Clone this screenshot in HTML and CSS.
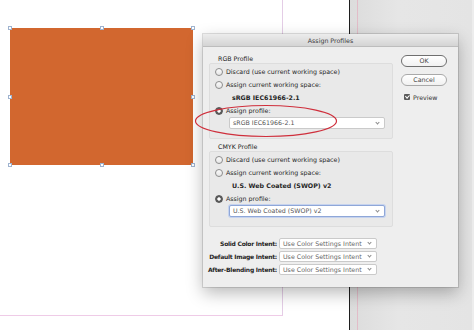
FILE: index.html
```html
<!DOCTYPE html>
<html>
	<head>
		<meta charset="UTF-8">
		<title>Assign Profiles</title>
		<link rel="stylesheet" href="styles.css">
	</head>
	<body>
		<div id="desk">
			<div class="page"></div>
			<div class="pasteboard"></div>
			<div class="bleed"></div>

			<div class="art">
				<span class="handle h-tl"></span>
				<span class="handle h-tc"></span>
				<span class="handle h-tr"></span>
				<span class="handle h-ml"></span>
				<span class="handle h-mr"></span>
				<span class="handle h-bl"></span>
				<span class="handle h-bc"></span>
				<span class="handle h-br"></span>
			</div>

			<div class="dialog">
				<div class="titlebar">Assign Profiles</div>
				<div class="dialog-body">
					<div class="main">
						<div class="group-title">RGB Profile</div>
						<div class="group-box">
							<div class="row"><span class="radio"></span>Discard (use current working space)</div>
							<div class="row"><span class="radio"></span>Assign current working space:</div>
							<div class="row strong">sRGB IEC61966-2.1</div>
							<div class="row"><span class="radio on"></span>Assign profile:</div>
							<div class="select wide">sRGB IEC61966-2.1<span class="chev"></span></div>
						</div>

						<div class="group-title">CMYK Profile</div>
						<div class="group-box">
							<div class="row"><span class="radio"></span>Discard (use current working space)</div>
							<div class="row"><span class="radio"></span>Assign current working space:</div>
							<div class="row strong">U.S. Web Coated (SWOP) v2</div>
							<div class="row"><span class="radio on"></span>Assign profile:</div>
							<div class="select wide focus">U.S. Web Coated (SWOP) v2<span class="chev"></span></div>
						</div>

						<div class="intents">
							<label>Solid Color Intent:</label>
							<div class="select small">Use Color Settings Intent<span class="chev"></span></div>
							<label>Default Image Intent:</label>
							<div class="select small">Use Color Settings Intent<span class="chev"></span></div>
							<label>After-Blending Intent:</label>
							<div class="select small">Use Color Settings Intent<span class="chev"></span></div>
						</div>
					</div>

					<div class="side">
						<div class="btn default">OK</div>
						<div class="btn">Cancel</div>
						<div class="check-row"><span class="checkbox"></span>Preview</div>
					</div>
				</div>
			</div>

			<!-- red marker drawn over the screenshot -->
			<svg class="marker" width="150" height="40" viewBox="0 0 150 40">
				<ellipse cx="73" cy="18" rx="70.5" ry="15.5" fill="none" stroke="#cf2f3c" stroke-width="1.2"/>
			</svg>
		</div>
	</body>
</html>
```

FILE: styles.css
```css
html,body{
	height: 100%;
	width: 100%;
}
*{
	margin: 0;
	padding: 0;
	box-sizing: border-box;
}
body{
	background: #fff;
	overflow: hidden;
	font-family: "DejaVu Sans", sans-serif;
	font-size: 6.3px;
	color: #262626;
}
#desk{
	position: relative;
	width: 474px;
	height: 330px;
}

/* document page and pasteboard */
.page{
	position: absolute;
	left: 0;
	top: 0;
	width: 283px;
	height: 316px;
	border-right: 1px solid #e4cde6;
	border-bottom: 1px solid #efcbe7;
}
.pasteboard{
	position: absolute;
	left: 349px;
	top: 0;
	width: 125px;
	height: 330px;
	background: linear-gradient(to right, #dcdcdc, #e6e6e6 40%, #e4e4e4);
	border-left: 1px solid #1e1e1e;
	border-right: 2px solid #ededed;
}
.bleed{
	position: absolute;
	left: 357px;
	top: 0;
	width: 1px;
	height: 330px;
	background: #e2bcc8;
}

/* selected artwork */
.art{
	position: absolute;
	left: 10px;
	top: 28px;
	width: 183px;
	height: 137px;
	background: #d2672f;
}
.handle{
	position: absolute;
	width: 4px;
	height: 4px;
	background: #fff;
	border: 1px solid #9fb3cf;
	margin: -2px 0 0 -2px;
}
.h-tl{left: 0; top: 0;}
.h-tc{left: 50%; top: 0;}
.h-tr{left: 100%; top: 0;}
.h-ml{left: 0; top: 50%;}
.h-mr{left: 100%; top: 50%;}
.h-bl{left: 0; top: 100%;}
.h-bc{left: 50%; top: 100%;}
.h-br{left: 100%; top: 100%;}

/* dialog window */
.dialog{
	position: absolute;
	left: 203px;
	top: 34px;
	width: 255px;
	height: 253px;
	background: #eeeeee;
	box-shadow: 0 6px 16px rgba(0,0,0,.28), 0 0 0 1px rgba(0,0,0,.12);
	display: flex;
	flex-direction: column;
}
.titlebar{
	height: 13px;
	line-height: 13px;
	text-align: center;
	color: #3a3a3a;
	background: linear-gradient(#ececec, #d4d4d4);
	border-bottom: 1px solid #bdbdbd;
}
.dialog-body{
	display: flex;
	padding: 8px 11px 0 6px;
}
.main{
	width: 184px;
}
.group-title{
	height: 8px;
	line-height: 8px;
	padding-left: 9px;
	color: #222;
}
.group-box{
	border: 1px solid #dddddd;
	border-radius: 2px;
	background: #e9e9e9;
	padding: 1px 6px 9px 5px;
	margin-bottom: 4px;
}
.row{
	height: 13px;
	display: flex;
	align-items: center;
	gap: 3px;
	white-space: nowrap;
}
.row.strong{
	font-weight: bold;
	padding-left: 17px;
}
.radio{
	width: 8px;
	height: 8px;
	border-radius: 50%;
	border: 1px solid #8c8c8c;
	background: linear-gradient(#fafafa, #e6e6e6);
	flex: none;
}
.radio.on{
	border-color: #555;
	background: radial-gradient(circle, #fff 0 1.4px, #5c5c5c 1.9px);
}
.select{
	position: relative;
	height: 12px;
	line-height: 10px;
	padding-left: 3px;
	background: #fff;
	border: 1px solid #cacaca;
	border-radius: 2px;
	color: #555;
	white-space: nowrap;
}
.select.wide{
	margin-left: 14px;
	width: 156px;
}
.select.focus{
	border-color: #8fa7d8;
	box-shadow: 0 0 0 1px #c6d3ee;
}
.chev{
	position: absolute;
	right: 5px;
	top: 3px;
	width: 3px;
	height: 3px;
	border-right: 1px solid #8a8a8a;
	border-bottom: 1px solid #8a8a8a;
	transform: rotate(45deg);
}

.intents{
	display: grid;
	grid-template-columns: 72px 98px;
	column-gap: 2px;
	align-items: center;
	margin: 10px 0 0 -4px;
}
.intents label{
	font-weight: bold;
	font-size: 6px;
	letter-spacing: -0.25px;
	text-align: right;
	white-space: nowrap;
	height: 13px;
	line-height: 13px;
}
.select.small{
	height: 11px;
	line-height: 9px;
	color: #666;
}
.select.small .chev{
	top: 2px;
}

/* buttons column */
.side{
	margin-left: 8px;
	width: 46px;
	padding-top: 0;
}
.btn{
	height: 12px;
	line-height: 10px;
	text-align: center;
	border-radius: 6px;
	border: 1px solid #a9a9a9;
	background: linear-gradient(#ffffff, #f1f1f1);
	color: #444;
	margin-bottom: 7px;
}
.btn.default{
	border-color: #6f6f6f;
}
.check-row{
	display: flex;
	align-items: center;
	gap: 3px;
	margin-left: 3px;
	height: 8px;
	color: #333;
}
.checkbox{
	width: 6px;
	height: 6px;
	border-radius: 1px;
	background: #5a5a5a;
	position: relative;
}
.checkbox::after{
	content: "";
	position: absolute;
	left: 2px;
	top: 0;
	width: 1.5px;
	height: 3px;
	border-right: 1px solid #fff;
	border-bottom: 1px solid #fff;
	transform: rotate(45deg);
}

.marker{
	position: absolute;
	left: 193px;
	top: 103px;
}
```
